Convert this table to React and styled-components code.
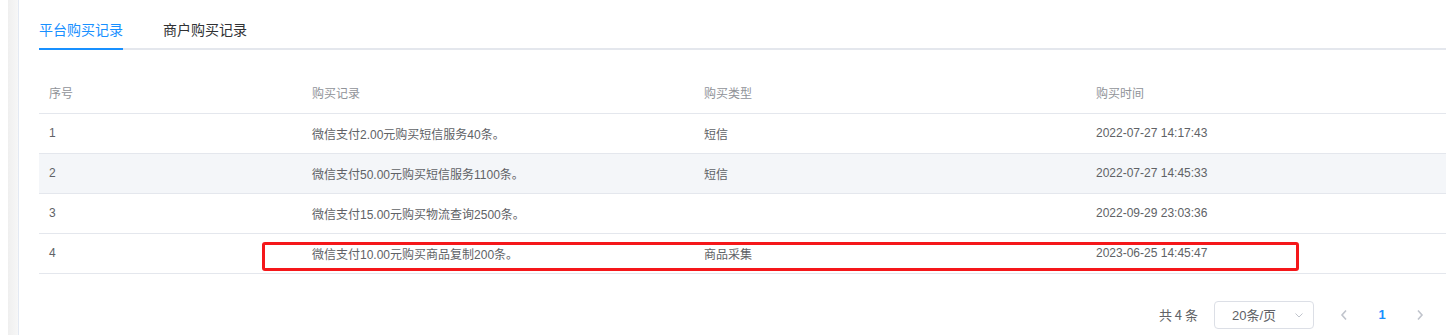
import React, { useState } from 'react'
import styled, { createGlobalStyle } from 'styled-components'

const GlobalStyle = createGlobalStyle`
    html, body {
        margin: 0;
        padding: 0;
        background: #fff;
        overflow: hidden;
    }
    body {
        font-family: "Liberation Sans", "Noto Sans CJK SC", sans-serif;
        color: #606266;
    }
`

const records = [
    { id: 1, text: '微信支付2.00元购买短信服务40条。', type: '短信', time: '2022-07-27 14:17:43' },
    { id: 2, text: '微信支付50.00元购买短信服务1100条。', type: '短信', time: '2022-07-27 14:45:33', hovered: true },
    { id: 3, text: '微信支付15.00元购买物流查询2500条。', type: '', time: '2022-09-29 23:03:36' },
    { id: 4, text: '微信支付10.00元购买商品复制200条。', type: '商品采集', time: '2023-06-25 14:45:47', marked: true },
]

const tabs = ['平台购买记录', '商户购买记录']

const App = () => {
    const [ activeTab, setActiveTab ] = useState(0)

    return (
        <Page>
            <GlobalStyle />
            <Gutter />
            <SideStrip />
            <Content>
                <TabBar>
                    {tabs.map((t, i) => (
                        <TabItem key={t} onClick={() => setActiveTab(i)}>
                            <TabLabel active={i === activeTab}>{t}</TabLabel>
                        </TabItem>
                    ))}
                </TabBar>

                <Table>
                    <colgroup>
                        <col style={{ width: 263 }} />
                        <col style={{ width: 392 }} />
                        <col style={{ width: 392 }} />
                        <col />
                    </colgroup>
                    <thead>
                        <tr>
                            <HeadCell>序号</HeadCell>
                            <HeadCell>购买记录</HeadCell>
                            <HeadCell>购买类型</HeadCell>
                            <HeadCell>购买时间</HeadCell>
                        </tr>
                    </thead>
                    <tbody>
                        {records.map(r => (
                            <Row key={r.id} shaded={r.hovered}>
                                <Cell>
                                    {r.id}
                                    {r.marked && <Highlight />}
                                </Cell>
                                <Cell>{r.text}</Cell>
                                <Cell>{r.type}</Cell>
                                <Cell>{r.time}</Cell>
                            </Row>
                        ))}
                    </tbody>
                </Table>

                <Pagination>
                    <Total>共 4 条</Total>
                    <SizeSelect>
                        <span>20条/页</span>
                        <svg width="10" height="10" viewBox="0 0 10 10">
                            <path d="M1.5 3.5 L5 7 L8.5 3.5" fill="none" stroke="#c0c4cc" strokeWidth="1" />
                        </svg>
                    </SizeSelect>
                    <PageBtn>
                        <svg width="10" height="12" viewBox="0 0 10 12">
                            <path d="M7 1.5 L3 6 L7 10.5" fill="none" stroke="#c0c4cc" strokeWidth="1.6" />
                        </svg>
                    </PageBtn>
                    <PageNum active>1</PageNum>
                    <PageBtn>
                        <svg width="10" height="12" viewBox="0 0 10 12">
                            <path d="M3 1.5 L7 6 L3 10.5" fill="none" stroke="#c0c4cc" strokeWidth="1.6" />
                        </svg>
                    </PageBtn>
                </Pagination>
            </Content>
        </Page>
    )
}

export default App

const Page = styled.div`
    display: flex;
    width: 1446px;
    height: 335px;
    overflow: hidden;
`

const Gutter = styled.div`
    width: 8px;
    flex-shrink: 0;
    background: #fff;
`

const SideStrip = styled.div`
    width: 10px;
    flex-shrink: 0;
    background: linear-gradient(to right, #efefef, #f7f7f7);
    border-right: 1px solid #e3e9f3;
`

const Content = styled.div`
    flex: 1;
    min-width: 0;
    padding: 10px 0 0 20px;
    display: flex;
    flex-direction: column;
`

const TabBar = styled.div`
    display: flex;
    height: 38px;
    border-bottom: 2px solid #e4e7ed;
    margin-bottom: 23px;
`

const TabItem = styled.div`
    display: flex;
    padding: 0 20px;
    height: 40px;
    cursor: pointer;

    &:first-child {
        padding-left: 0;
    }
`

const TabLabel = styled.span`
    display: block;
    height: 40px;
    line-height: 38px;
    box-sizing: border-box;
    font-size: 14px;
    font-family: "Noto Sans CJK SC", sans-serif;
    color: ${p => p.active ? '#1890ff' : '#303133'};
    border-bottom: 2px solid ${p => p.active ? '#1890ff' : 'transparent'};
`

const Table = styled.table`
    width: 1420px;
    border-collapse: collapse;
    table-layout: fixed;
    font-size: 12px;
`

const HeadCell = styled.th`
    height: 40px;
    padding: 0 10px;
    text-align: left;
    font-weight: normal;
    color: #909399;
    font-family: "Noto Sans CJK SC", sans-serif;
    border-bottom: 1px solid #e4e7ed;
    box-sizing: border-box;
`

const Row = styled.tr`
    background: ${p => p.shaded ? '#f4f6f9' : '#fff'};
`

const Cell = styled.td`
    position: relative;
    height: 40px;
    padding: 0 10px;
    color: #606266;
    border-bottom: 1px solid #e4e7ed;
    box-sizing: border-box;
    white-space: nowrap;
`

const Highlight = styled.div`
    position: absolute;
    left: 223px;
    top: 8px;
    width: 1037px;
    height: 29px;
    border: 3px solid #f5171a;
    border-radius: 3px;
    box-sizing: border-box;
    pointer-events: none;
`

const Pagination = styled.div`
    display: flex;
    align-items: center;
    justify-content: flex-end;
    margin-top: 27px;
    width: 1400px;
    font-size: 13px;
`

const Total = styled.span`
    color: #606266;
    margin-right: 16px;
    font-family: "Noto Sans CJK SC", sans-serif;
`

const SizeSelect = styled.div`
    width: 100px;
    height: 28px;
    box-sizing: border-box;
    border: 1px solid #dcdfe6;
    border-radius: 4px;
    display: flex;
    align-items: center;
    justify-content: space-between;
    padding: 0 9px 0 17px;
    color: #606266;
    margin-right: 11px;

    span {
        font-family: "Liberation Sans", "Noto Sans CJK SC", sans-serif;
    }
`

const PageBtn = styled.div`
    width: 30px;
    height: 28px;
    display: flex;
    align-items: center;
    justify-content: center;
    margin: 0 4px;
`

const PageNum = styled.div`
    width: 30px;
    height: 28px;
    line-height: 28px;
    text-align: center;
    font-weight: bold;
    color: ${p => p.active ? '#1890ff' : '#606266'};
    margin: 0 4px;
`
